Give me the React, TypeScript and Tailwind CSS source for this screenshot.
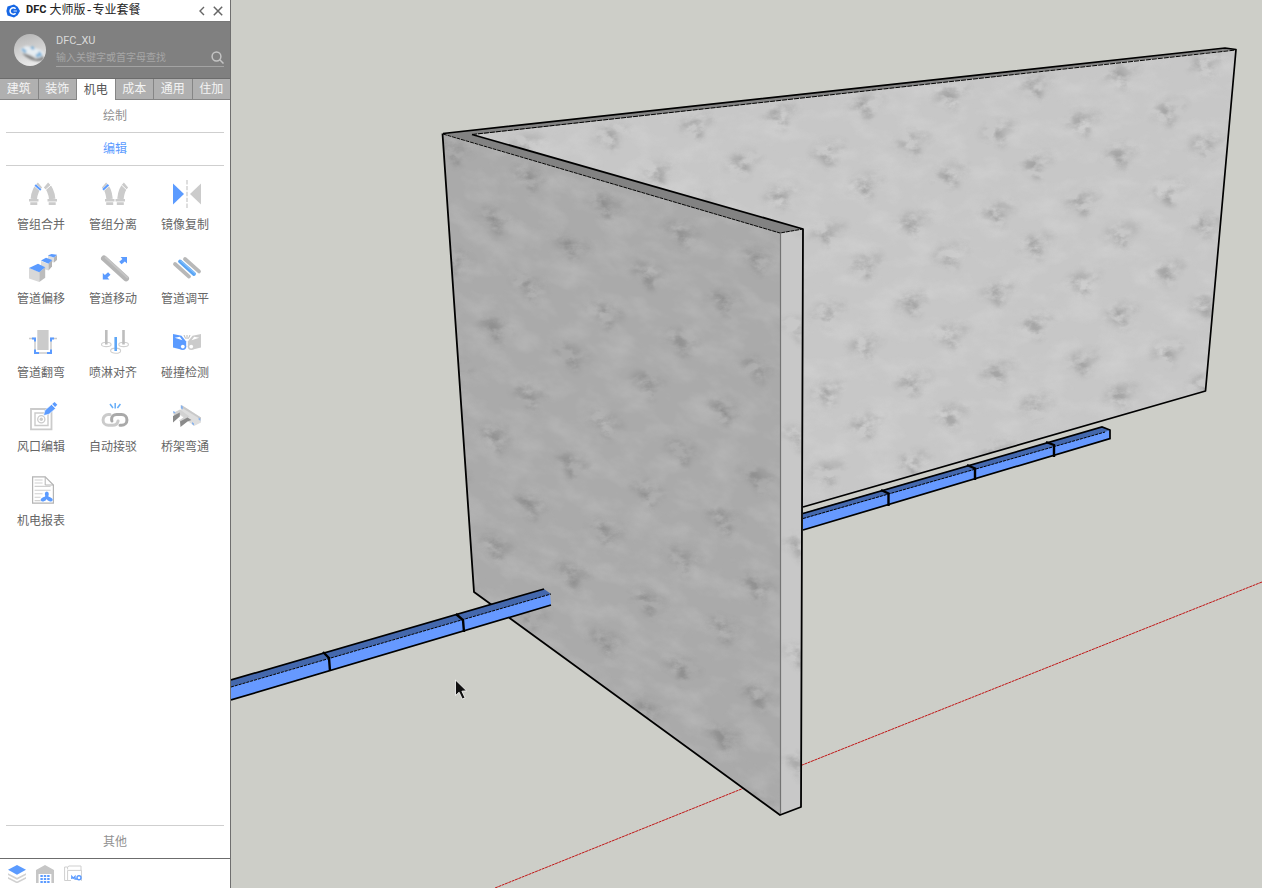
// src/App.tsx
import { useState } from 'react';
import type { ReactNode } from 'react';

const TABS = ['建筑', '装饰', '机电', '成本', '通用', '住加'];

const BLUE = '#5b9bff';
const GREY = '#cbcbcb';

type Tool = {
  name: string;
  icon: ReactNode;
};

const TOOLS: Tool[] = [
  {
    name: '管组合并',
    icon: (
      <>
        <g fill="none" stroke={GREY} strokeWidth="6.4">
          <path d="M11 5C7 8.500 5.400 13 4.800 19" />
          <path d="M17 5C21 8.500 22.600 13 23.200 19" />
        </g>
        <path d="M0 19h9.5v2.6H0zM18.5 19H28v2.6h-9.5zM1.3 22.2h7V25h-7zM19.7 22.2h7V25h-7z" fill={GREY} />
        <path d="M5.500 4.600l7 6.200" stroke="#fff" strokeWidth="2.800" />
        <path d="M22.500 4.600l-7 6.200" stroke="#fff" strokeWidth="1" />
        <path d="M6.200 5l5.600 5" stroke={BLUE} strokeWidth="2" />
      </>
    ),
  },
  {
    name: '管组分离',
    icon: (
      <>
        <g fill="none" stroke={GREY} strokeWidth="6.4">
          <path d="M3 5C7 8.500 8 13 8.600 19" />
          <path d="M25 5C21 8.500 20 13 19.400 19" />
        </g>
        <path d="M4 19h9.5v2.6H4zM14.5 19H24v2.6h-9.5zM5.2 22.2h7V25h-7zM15.8 22.2h7V25h-7z" fill={GREY} />
        <path d="M1.500 10.600l7-6.600" stroke="#fff" strokeWidth="2.800" />
        <path d="M26.500 10.600l-7-6.600" stroke="#fff" strokeWidth="1" />
        <path d="M2 9.800l5.400-5" stroke={BLUE} strokeWidth="2" />
      </>
    ),
  },
  {
    name: '镜像复制',
    icon: (
      <>
        <path d="M0 3.6L11 14 0 24.4z" fill={BLUE} />
        <path d="M28 3.6L17 14l11 10.4z" fill={GREY} />
        <path d="M14 0v28" stroke="#d6d6d6" strokeWidth="1.6" strokeDasharray="4.4 1.5" />
      </>
    ),
  },
  {
    name: '管道偏移',
    icon: (
      <>
        <path d="M19 1.5l6 2v5l-6-1z" fill="#dedede" />
        <path d="M25 3.4l3-2.4v5l-3 2.6z" fill="#b5b5b5" />
        <path d="M18.8 1.4L22.5 0l5.5.8-3 2.6z" fill={BLUE} />
        <path d="M12 7l7.5 3v6.6L12 14z" fill="#dcdcdc" />
        <path d="M19.5 9.7L23 6.2v6.4l-3.5 4z" fill="#b3b3b3" />
        <path d="M12 6.5l5-2.7 6.2 2.3-3.7 3.7z" fill={BLUE} />
        <path d="M0 14l10.3 4v10L0 24.6z" fill="#d8d8d8" />
        <path d="M10.3 18l5.9-4.6v10.4L10.3 28z" fill="#bcbcbc" />
        <path d="M0 14l9-4.3 7.2 3.5-5.9 5z" fill={BLUE} />
      </>
    ),
  },
  {
    name: '管道移动',
    icon: (
      <>
        <path d="M3 4.4l22 20" stroke="#b5b5b5" strokeWidth="6" strokeLinecap="round" />
        <path d="M4.6 3.4l21.8 20" stroke="#c4c4c4" strokeWidth="2" strokeLinecap="round" />
        <path d="M26 3h-6.4l1.8 2-3.2 2.8 2.4 2.5 3.2-2.9L26 9.6zM1.8 25.4h6.6l-1.9-2 3-2.7-2.4-2.5-3.2 2.9-2.1-2.2z" fill={BLUE} />
      </>
    ),
  },
  {
    name: '管道调平',
    icon: (
      <g strokeWidth="3.8" strokeLinecap="round">
        <path d="M12 5l14 12.4M2 10l14 12.6" stroke="#b8b8b8" />
        <path d="M7 7.4L21 20" stroke="#5aa5f5" />
        <path d="M8 6.9L21.6 19" stroke="#82bdfa" strokeWidth="1.4" />
      </g>
    ),
  },
  {
    name: '管道翻弯',
    icon: (
      <>
        <path d="M8.3 2H19.6v20H8.3z" fill={GREY} />
        <path d="M0 10.5h6V25h16V10.5h6" fill="none" stroke={GREY} strokeWidth="1.5" />
        <path d="M3 10.5h3v3M25 10.5h-3v3M6 21.5V25h4M22 21.5V25h-4" fill="none" stroke={BLUE} strokeWidth="2" />
      </>
    ),
  },
  {
    name: '喷淋对齐',
    icon: (
      <>
        <g fill="none" stroke="#d0d0d0" strokeWidth="1.1">
          <ellipse cx="5.3" cy="16.4" rx="4.8" ry="2.2" />
          <ellipse cx="22.6" cy="16.4" rx="4.8" ry="2.2" />
          <ellipse cx="14.6" cy="22.7" rx="5" ry="2.6" />
        </g>
        <path d="M5.3 2v14.5M22.5 2v14.5" stroke="#bdbdbd" strokeWidth="2.6" />
        <path d="M14.7 9v14" stroke="#5ea6f6" strokeWidth="2.6" />
      </>
    ),
  },
  {
    name: '碰撞检测',
    icon: (
      <>
        <Car color={BLUE} />
        <g transform="translate(28 0) scale(-1 1)">
          <Car color={GREY} />
        </g>
        <path d="M14 7v4M11 7l1.6 3.6M17 7l-1.6 3.6" stroke="#bababa" strokeWidth="1" />
      </>
    ),
  },
  {
    name: '风口编辑',
    icon: (
      <>
        <g fill="none" stroke={GREY}>
          <path d="M2 7h20.5v20.3H2z" strokeWidth="1.8" />
          <path d="M6 11h13v12.5H6z" strokeWidth="1.4" />
          <circle cx="12.3" cy="17.2" r="3.6" strokeWidth="1.3" />
        </g>
        <circle cx="12.3" cy="17.2" r="1.7" fill={GREY} />
        <path d="M14.500 13.600l1.500-5.400 6.500-5.700 4 4-6.500 5.700z" fill={BLUE} stroke="#fff" strokeWidth=".6" />
        <path d="M23.200 2L25.600 0l2.700 2.700-2.200 2.200z" fill={BLUE} />
      </>
    ),
  },
  {
    name: '自动接驳',
    icon: (
      <>
        <g fill="none" strokeWidth="3" strokeLinecap="round">
          <path d="M9 12.6H7.4a5.3 5.3 0 0 0 0 10.7h4.2c3 0 5-2 5.5-4.4" stroke={GREY} />
          <path d="M19 23.3h1.600a5.3 5.3 0 0 0 0-10.7h-5c-3 0-5 2-5 4.800 0 .6.1 1.100.3 1.600" stroke="#a9a9a9" />
        </g>
        <path d="M14.2 1v5.5M9 2l3 4M19.4 2l-3 4" stroke="#65adf8" strokeWidth="1.5" />
      </>
    ),
  },
  {
    name: '桥架弯通',
    icon: (
      <>
        <path d="M8.400 3L28 15.400v5L21 24 7 13z" fill="#dedede" />
        <path d="M8.400 3L28 15.400v2L8.400 5.500z" fill="#c9c9c9" />
        <path d="M0 11l7-3.500 9.500 7L8 20.500l-2-2 5-3.500-3-2-6 2z" fill="#d2d2d2" />
        <path d="M0 14l6.800-3.500v4L0 20.500zM7 19.500l7.500-4 4 2.500-4 1.500L7.500 25z" fill="#8a8a8a" />
        <path d="M7.8 3l2 1.6v3l-2-1.4zM25.6 15.5l1.8 1.2v2l-1.8-1zM19 20l2 1.4v2L19 22zM.2 9l2 1v1.6l-2-.8z" fill="#86b2ee" />
      </>
    ),
  },
  {
    name: '机电报表',
    icon: (
      <>
        <path d="M3.6.8h12.6l8.2 8.2v18.2H3.6z" fill="#fff" stroke="#b4b4b4" strokeWidth="1.2" />
        <path d="M16.2.8V9h8.2" fill="none" stroke="#b4b4b4" />
        <path d="M5.6 4h8M5.6 7h8M5.6 10.4h16M5.6 14.2h16M5.6 17.8h8M5.6 21.3h6M5.6 24.6h6" stroke="#d0d0d0" strokeWidth="1.1" />
        <g fill={BLUE}>
          <ellipse cx="17.800" cy="18" rx="2" ry="2.600" />
          <ellipse cx="14.600" cy="23.200" rx="3" ry="2" transform="rotate(-25 14.600 23.200)" />
          <ellipse cx="20.800" cy="23.200" rx="3" ry="2" transform="rotate(25 20.800 23.200)" />
          <circle cx="17.800" cy="21.300" r="2" />
        </g>
      </>
    ),
  },
];

function Car({ color }: { color: string }) {
  return (
    <>
      <path d="M0 6l8.500 1.800 4.700 5.700v6L8 21.500 0 19.500z" fill={color} />
      <path d="M1.800 9.800l5-1 2.600 3.400z" fill="#fff" />
      <circle cx="9.8" cy="18.6" r="3.4" fill={color} />
      <circle cx="9.8" cy="18.6" r="1.9" fill="#fff" />
    </>
  );
}

function Logo() {
  return (
    <svg viewBox="0 0 14 14" className="h-3.5 w-3.5 shrink-0" aria-hidden="true">
      <path d="M1.500 2.500L8 .6l3.600 2.200L14 7l-2.400 4.200L8 13.400l-6.500-1.900L.4 7z" fill="#1667e5" />
      <path d="M9.600 4.800a3.200 3.200 0 1 0 0 4.400" fill="none" stroke="#fff" strokeWidth="1.5" />
      <path d="M7.500 7h3.500" stroke="#fff" strokeWidth=".8" />
    </svg>
  );
}

function Avatar() {
  return (
    <svg viewBox="0 0 32 32" className="h-8 w-8 shrink-0" aria-hidden="true">
      <defs>
        <linearGradient id="avatarBg" x1="0" y1="0" x2="0.3" y2="1">
          <stop offset="0" stopColor="#b2b2b2" />
          <stop offset="0.6" stopColor="#d2d2d2" />
          <stop offset="1" stopColor="#e8e8e8" />
        </linearGradient>
        <filter id="avatarSoft">
          <feGaussianBlur stdDeviation="0.9" />
        </filter>
        <clipPath id="avatarClip">
          <circle cx="16" cy="16" r="16" />
        </clipPath>
      </defs>
      <g clipPath="url(#avatarClip)">
        <path d="M0 0h32v32H0z" fill="url(#avatarBg)" />
        <g filter="url(#avatarSoft)">
          <path d="M8 19c6 1 10 3 14 6l7-3 1 4c-7 3-16 0-22-7z" fill="#858585" />
          <path d="M6 15l6-3 6 1 9 3 3 3-4 5-9-3-9-3z" fill="#e6edf2" />
          <path d="M8 15l4 3M17 13l3 2M25 18l2 4M22 21l3 1" stroke="#6ea9d4" strokeWidth="2.4" />
        </g>
      </g>
    </svg>
  );
}

function Header() {
  return (
    <header className="flex h-[22px] items-center border-b border-[#777] pl-1.5 pr-1">
      <Logo />
      <h1 className="ml-1.5 flex flex-1 items-center gap-[3px] whitespace-nowrap text-xs text-[#222]">
        <span className="font-['Roboto',sans-serif] text-[11px] font-bold">DFC</span>
        <span>大师版-专业套餐</span>
      </h1>
      <button type="button" aria-label="收起" className="flex h-4 w-4 items-center justify-center text-[#666]">
        <svg viewBox="0 0 10 10" className="h-2.5 w-2.5" fill="none" stroke="currentColor" strokeWidth="1.4">
          <path d="M7 1L3 5l4 4" />
        </svg>
      </button>
      <button type="button" aria-label="关闭" className="flex h-4 w-4 items-center justify-center text-[#666]">
        <svg viewBox="0 0 10 10" className="h-2.5 w-2.5" fill="none" stroke="currentColor" strokeWidth="1.5">
          <path d="M.8.8l8.4 8.4M9.2.8L.8 9.2" />
        </svg>
      </button>
    </header>
  );
}

function Profile() {
  const [query, setQuery] = useState('');

  return (
    <div className="flex h-[57px] items-center gap-2.5 border-b border-[#6c6c6c] bg-[#808080] pl-3.5 pr-1.5">
      <Avatar />
      <div className="min-w-0 flex-1">
        <div className="font-['Roboto',sans-serif] text-[11px] leading-4 text-[#d9d9d9]">DFC_XU</div>
        <form
          className="flex h-[18px] items-end border-b border-[#a3a3a3]"
          onSubmit={(e) => e.preventDefault()}
        >
          <input
            type="text"
            aria-label="输入关键字或首字母查找"
            placeholder="输入关键字或首字母查找"
            value={query}
            onChange={(e) => setQuery(e.target.value)}
            className="min-w-0 flex-1 bg-transparent text-[10px] leading-[14px] text-white outline-none placeholder:text-[#a6a6a6]"
          />
          <button type="submit" aria-label="查找" className="pb-0.5 text-[#c4c4c4]">
            <svg viewBox="0 0 13 13" className="h-[13px] w-[13px]" fill="none" stroke="currentColor" strokeWidth="1.5">
              <circle cx="5.5" cy="5.5" r="4.4" />
              <path d="M8.8 8.8l3.7 3.7" />
            </svg>
          </button>
        </form>
      </div>
    </div>
  );
}

function Sidebar() {
  const [tab, setTab] = useState('机电');

  return (
    <aside className="flex w-[231px] shrink-0 flex-col border-r border-[#6f6f6f] bg-white">
      <Header />
      <Profile />

      <nav className="flex h-[21px] gap-px bg-[#858585]">
        {TABS.map((name) => (
          <button
            key={name}
            type="button"
            onClick={() => setTab(name)}
            className={
              name === tab
                ? 'flex-1 bg-white pt-0.5 text-xs text-[#555]'
                : 'flex-1 border-b border-[#858585] bg-[#b0b0b0] pt-0.5 text-xs text-[#f4f4f4]'
            }
          >
            {name}
          </button>
        ))}
      </nav>

      <button type="button" className="mx-1.5 h-[33px] border-b border-[#cfcfcf] pt-0.5 text-xs text-[#919191]">
        绘制
      </button>
      <button type="button" className="mx-1.5 h-[33px] border-b border-[#cfcfcf] pt-0.5 text-xs text-[#5b9bff]">
        编辑
      </button>

      <div className="grid grid-cols-[repeat(3,72px)] px-[5px] pt-[14px]">
        {TOOLS.map((tool) => (
          <button key={tool.name} type="button" className="flex h-[74px] flex-col items-start gap-2.5 pl-3">
            <svg viewBox="0 0 28 28" className="ml-3 h-7 w-7 overflow-visible" aria-hidden="true">
              {tool.icon}
            </svg>
            <span className="whitespace-nowrap text-xs leading-4 text-[#666]">{tool.name}</span>
          </button>
        ))}
      </div>

      <button type="button" className="mx-1.5 mt-auto h-[33px] border-t border-[#cfcfcf] pt-0.5 text-xs text-[#919191]">
        其他
      </button>
      <BottomBar />
    </aside>
  );
}

function BottomBar() {
  return (
    <footer className="flex h-[30px] items-center gap-2.5 border-t border-[#6c6c6c] pl-2">
      <button type="button" aria-label="图层">
        <svg viewBox="0 0 18 18" className="h-[18px] w-[18px]">
          <path d="M0 12l9 4.400 9-4.400v1.800L9 18.400l-9-4.600zM0 8.200l9 4.600 9-4.600v1.900L9 14.800l-9-4.700z" fill="#d2d2d2" />
          <path d="M9 0l9 4.800-9 5L0 4.800z" fill={BLUE} />
        </svg>
      </button>
      <button type="button" aria-label="建筑">
        <svg viewBox="0 0 18 18" className="h-[18px] w-[18px]">
          <path d="M0 5l9-5 9 5v13h-2.6V9H2.6v9H0z" fill="#c6c6c6" />
          <path
            d="M4.4 10h2.4v2H4.4zM7.8 10h2.4v2H7.8zM11.2 10h2.4v2h-2.4zM4.4 13h2.4v2H4.4zM7.8 13h2.4v2H7.8zM11.2 13h2.4v2h-2.4zM4.4 16h2.4v2H4.4zM7.8 16h2.4v2H7.8zM11.2 16h2.4v2h-2.4z"
            fill={BLUE}
          />
        </svg>
      </button>
      <button type="button" aria-label="文件">
        <svg viewBox="0 0 18 18" className="h-[18px] w-[18px]" fill="none" stroke="#cfcfcf">
          <path d="M7 15.500H.6V2h3L5 1h12v4.400M3.600 2v2.400M3.600 15V5.400h14V15.500H17" />
          <path d="M7.8 14v-2.6l1.6 1.8 1.6-1.8V14h2" stroke={BLUE} strokeWidth="1.3" />
          <circle cx="15" cy="12.8" r="2" fill="#fff" stroke={BLUE} strokeWidth="1.4" />
        </svg>
      </button>
    </footer>
  );
}

// One weathered patch of the concrete texture, repeated by the wall patterns
function Patch({ x, y }: { x: number; y: number }) {
  return (
    <g transform={`translate(${x} ${y})`}>
      <ellipse rx="6" ry="12" transform="rotate(-28)" fillOpacity="0.9" />
      <ellipse cx="3" cy="-8" rx="17" ry="8" fillOpacity="0.4" />
      <ellipse cx="-12" cy="-3" rx="6" ry="5" fillOpacity="0.4" />
    </g>
  );
}

// Model view: two concrete walls with a duct running behind and in front of them
function ModelView() {
  return (
    <svg
      viewBox="231 0 1031 888"
      preserveAspectRatio="xMinYMin slice"
      className="h-full w-full"
      role="img"
      aria-label="模型视图"
    >
      <defs>
        <pattern id="backPatches" width="85" height="80" patternUnits="userSpaceOnUse" patternTransform="matrix(1 -0.12 0 1 799 136)">
          <Patch x={28} y={24} />
          <Patch x={66} y={61} />
        </pattern>
        <pattern id="frontPatches" width="76" height="109" patternUnits="userSpaceOnUse" patternTransform="matrix(1 0.36 0 1 625 243)">
          <Patch x={22} y={27} />
          <Patch x={56} y={82} />
        </pattern>
        <filter id="stains" x="0" y="0" width="100%" height="100%" colorInterpolationFilters="sRGB">
          <feGaussianBlur in="SourceAlpha" stdDeviation="3" result="soft" />
          <feTurbulence type="fractalNoise" baseFrequency="0.07 0.1" numOctaves="4" seed="8" />
          <feColorMatrix values="0 0 0 0 0.4  0 0 0 0 0.4  0 0 0 0 0.4  3 0 0 0 -1.05" result="grain" />
          <feComposite in="grain" in2="soft" operator="in" />
        </filter>
        <filter id="shine" x="0" y="0" width="100%" height="100%" colorInterpolationFilters="sRGB">
          <feTurbulence type="fractalNoise" baseFrequency="0.03 0.05" numOctaves="4" seed="21" />
          <feColorMatrix values="0 0 0 0 0.88  0 0 0 0 0.88  0 0 0 0 0.88  0 1.6 0 0 -0.65" />
        </filter>
        <clipPath id="backWall">
          <path d="M472 135L1236 50l-31 341-402 116V229z" />
        </clipPath>
        <clipPath id="frontWall">
          <path d="M443 134l337 99v582L474 592z" />
        </clipPath>
        <clipPath id="wallEnd">
          <path d="M780 233l23-4-2 578-21 8z" />
        </clipPath>
      </defs>

      <path d="M231 0h1031v888H231z" fill="#cdcec8" />
      <path d="M495 888l249-100M801 765.500L1262 582" stroke="#c01414" strokeWidth="1" strokeDasharray="3 .6" />

      {/* back wall */}
      <g clipPath="url(#backWall)">
        <path d="M440 40h810v480H440z" fill="#c7c7c7" />
        <rect x="440" y="40" width="810" height="480" filter="url(#shine)" opacity="0.4" />
        <rect x="440" y="40" width="810" height="480" fill="url(#backPatches)" filter="url(#stains)" opacity="0.4" />
      </g>
      <path d="M443 133.500L1225 48l11 1.500L472 135l331 94-23 4z" fill="#828282" />

      {/* front wall */}
      <g clipPath="url(#frontWall)">
        <path d="M440 130h344v690H440z" fill="#aaa" />
        <g transform="rotate(16 610 470)">
          <rect x="340" y="40" width="560" height="860" filter="url(#shine)" opacity="0.28" />
        </g>
        <rect x="440" y="130" width="344" height="690" fill="url(#frontPatches)" filter="url(#stains)" opacity="0.45" />
      </g>
      <g clipPath="url(#wallEnd)">
        <path d="M780 229h23v586h-23z" fill="#c8c8c8" />
        <rect x="780" y="229" width="23" height="586" fill="url(#frontPatches)" filter="url(#stains)" opacity="0.35" />
      </g>

      <g fill="none" stroke="#000" strokeLinejoin="round">
        <path d="M443 134l337 99 23-4" strokeWidth="1" strokeDasharray="4 .7" />
        <path d="M472 134.500L1236 50" strokeWidth="1" strokeDasharray="5 1" />
        <path d="M443 133.500L1225 48l11 1.500L1205.500 391 803 507" strokeWidth="1.700" />
        <path d="M472 134.500L803 229l-2 578-21 8-306-223-31.500-458.500" strokeWidth="1.800" />
        <path d="M780.500 233v581" stroke="#737373" strokeWidth="1.200" />
      </g>

      {/* duct behind the wall */}
      <path d="M803 518l302-87 5-1v9l-307 91z" fill="#6699ff" />
      <path d="M803 513l299-86 8 3-5 2-302 87z" fill="#4468ad" />
      <g fill="none" stroke="#000">
        <path d="M803 518.500L1105 432" strokeWidth="1" strokeDasharray="3 1" />
        <path d="M803 513.500L1102 427l8 3v8.500L803 530" strokeWidth="1.700" />
        <path d="M881 490l7.500 3.500V506M967 465l8 3.500V480M1046 442l8 3v12" strokeWidth="2.400" />
      </g>

      {/* duct in front of the wall */}
      <path d="M231 687l319-93 1 11-320 95z" fill="#6699ff" />
      <path d="M231 680l313-91 7 5-320 93z" fill="#4468ad" />
      <g fill="none" stroke="#000">
        <path d="M231 687l320-93" strokeWidth="1" strokeDasharray="3 1" />
        <path d="M231 680l313-91M231 700l320-95" strokeWidth="1.700" />
        <path d="M323 652l6 6 1 13M456 614l7 6 1 12" strokeWidth="2.400" />
      </g>

      <path d="M455.500 680v15.500l3.600-3.300 3.200 6.800 2.700-1.200-3.100-6.600 4.600-.4z" fill="#111" stroke="#fff" strokeWidth=".8" />
    </svg>
  );
}

export default function App() {
  return (
    <div className="flex h-screen overflow-hidden bg-[#cdcec8] font-['Liberation_Mono','Noto_Sans_CJK_SC',monospace]">
      <Sidebar />
      <main className="min-w-0 flex-1">
        <ModelView />
      </main>
    </div>
  );
}
